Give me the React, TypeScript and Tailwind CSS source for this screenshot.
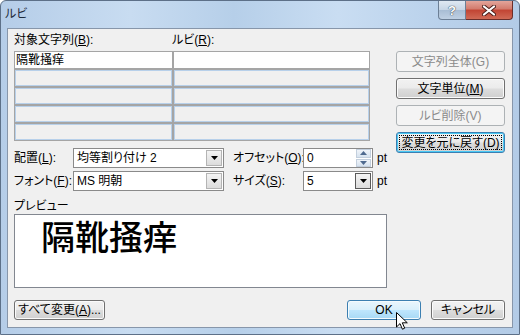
import { ReactNode } from "react";

const Acc = ({ children }: { children: ReactNode }) => (
  <span className="underline underline-offset-[1px]">{children}</span>
);

type Kind = "normal" | "disabled" | "focus" | "hover";

const Btn = ({ kind = "normal", className = "", children }: { kind?: Kind; className?: string; children: ReactNode }) => {
  const look = {
    normal:
      "border-[#707070] bg-[linear-gradient(#f2f2f2_0%,#ebebeb_48%,#dddddd_52%,#cfcfcf_100%)] shadow-[inset_0_0_0_1px_#fbfbfb]",
    disabled: "border-[#adb2b5] bg-[#f4f4f4] text-[#8b8b8b]",
    focus:
      "border-[#3c7fb1] bg-[linear-gradient(#f2f2f2_0%,#ebebeb_48%,#dddddd_52%,#cfcfcf_100%)] shadow-[inset_0_0_0_1px_#48c9f5]",
    hover:
      "border-[#3c7fb1] bg-[linear-gradient(#eaf6fd_0%,#d9f0fc_48%,#bee6fd_52%,#a7d9f5_100%)] shadow-[inset_0_0_0_1px_#f4fbfe]",
  }[kind];
  return (
    <div className={`relative flex shrink-0 items-center justify-center whitespace-nowrap rounded-[3px] border leading-none ${look} ${className}`}>
      {kind === "focus" && <div className="absolute inset-[2px] border border-dotted border-black" />}
      <span className="relative">{children}</span>
    </div>
  );
};

const Arrow = () => (
  <svg width="7" height="4" viewBox="0 0 7 4">
    <path d="M0 0h7L3.5 4z" fill="#000" />
  </svg>
);

const Combo = ({ value, className = "", dark = false }: { value: string; className?: string; dark?: boolean }) => (
  <div className={`flex h-[20px] shrink-0 items-center border border-[#8a8a8a] bg-white ${className}`}>
    <span className="flex-1 whitespace-nowrap pl-[3px] leading-none">{value}</span>
    <div
      className={`mr-[1px] flex h-[16px] w-[16px] items-center justify-center border bg-[linear-gradient(#f4f4f4,#dcdcdc)] ${
        dark ? "border-[#5a5a5a]" : "border-[#b4b4b4]"
      }`}
    >
      <Arrow />
    </div>
  </div>
);

const Spin = ({ value }: { value: string }) => (
  <div className="flex h-[20px] w-[70px] shrink-0 items-center border border-[#8a8a8a] bg-white">
    <span className="flex-1 pl-[3px] leading-none">{value}</span>
    <div className="mr-[1px] flex h-[18px] w-[15px] flex-col gap-[1px]">
      <div className="flex flex-1 items-center justify-center border border-[#c3cfdd] bg-[linear-gradient(#f0f4f9,#d6e2ef)]">
        <svg width="7" height="4" viewBox="0 0 7 4">
          <path d="M0 4h7L3.5 0z" fill="#4f6a8f" />
        </svg>
      </div>
      <div className="flex flex-1 items-center justify-center border border-[#c3cfdd] bg-[linear-gradient(#f0f4f9,#d6e2ef)]">
        <svg width="7" height="4" viewBox="0 0 7 4">
          <path d="M0 0h7L3.5 4z" fill="#4f6a8f" />
        </svg>
      </div>
    </div>
  </div>
);

const Cell = ({ first, children }: { first?: boolean; children?: ReactNode }) => (
  <div
    className={
      first
        ? "flex h-[16px] items-center bg-white pl-[1px] leading-none"
        : "h-[16px] border border-[#b7d0ea] bg-[#f0f0f0]"
    }
  >
    {children}
  </div>
);

export default function App() {
  return (
    <div className="relative flex h-[335px] w-[520px] flex-col overflow-hidden rounded-t-[6px] border border-[#5d7088] bg-[linear-gradient(90deg,#b5cde8,#c8dcf1_25%,#b6cfe9_45%,#c9ddf2_65%,#b9d1eb_85%,#b3cbe6)] font-['Liberation_Sans','Noto_Sans_CJK_JP',sans-serif] text-[12px] text-black [font-feature-settings:'palt']">
      {/* title bar */}
      <div className="flex h-[27px] shrink-0 items-start justify-between">
        <span className="pl-[4px] pt-[7px] text-[12px] leading-none text-[#1e2a3a]">ルビ</span>
        <div className="mr-[6px] flex">
          <div className="flex h-[19px] w-[28px] items-center justify-center rounded-bl-[4px] border border-t-0 border-[#6c7f95] bg-[linear-gradient(#dfe8f2,#c6d5e5_50%,#a8bdd4_51%,#bfd0e3)]">
            <span className="text-[13px] font-bold leading-none text-white [text-shadow:0_0_1px_#2f3b4a,0_0_1px_#2f3b4a]">?</span>
          </div>
          <div className="flex h-[19px] w-[47px] items-center justify-center rounded-br-[4px] border border-l-0 border-t-0 border-[#6b2e2a] bg-[linear-gradient(#e3a59b,#d27a6c_45%,#c24433_50%,#d06a56)]">
            <svg width="14" height="11" viewBox="0 0 14 11">
              <path d="M2 1.5l10 8M12 1.5l-10 8" stroke="#4a1f1b" strokeWidth="4" strokeLinecap="round" />
              <path d="M2 1.5l10 8M12 1.5l-10 8" stroke="#fff" strokeWidth="2.2" strokeLinecap="round" />
            </svg>
          </div>
        </div>
      </div>

      {/* client */}
      <div className="mx-[6px] mb-[6px] flex flex-1 flex-col whitespace-nowrap border border-[#8796aa] bg-[#f0f0f0] pl-[6px] pr-[7px]">
        <div className="flex justify-between">
          <div className="flex w-[374px] flex-col">
            <div className="mt-[4px] flex h-[14px] items-center leading-none">
              <span className="w-[158px]">
                対象文字列(<Acc>B</Acc>):
              </span>
              <span>
                ルビ(<Acc>R</Acc>):
              </span>
            </div>
            <div className="mt-[4px] grid h-[90px] w-[356px] grid-cols-[157px_1fr] gap-[2px] border border-[#a5a5a5] bg-[#a5a5a5]">
              <Cell first>隔靴掻痒</Cell>
              <Cell first />
              <Cell />
              <Cell />
              <Cell />
              <Cell />
              <Cell />
              <Cell />
              <Cell />
              <Cell />
            </div>

            <div className="mt-[7px] flex flex-col gap-[3px]">
              <div className="flex items-center leading-none">
                <span className="w-[59px] shrink-0">
                  配置(<Acc>L</Acc>):
                </span>
                <Combo value="均等割り付け 2" className="w-[151px]" />
                <span className="ml-[9px] w-[70px] shrink-0">
                  オフセット(<Acc>O</Acc>):
                </span>
                <Spin value="0" />
                <span className="ml-[4px]">pt</span>
              </div>
              <div className="flex items-center leading-none">
                <span className="w-[59px] shrink-0">
                  フォント(<Acc>F</Acc>):
                </span>
                <Combo value="MS 明朝" className="w-[151px]" />
                <span className="ml-[9px] w-[70px] shrink-0">
                  サイズ(<Acc>S</Acc>):
                </span>
                <Combo value="5" className="w-[70px]" dark />
                <span className="ml-[4px]">pt</span>
              </div>
            </div>

            <div className="mt-[9px] h-[13px] leading-none">プレビュー</div>
            <div className="mt-[1px] h-[74px] w-[373px] border border-[#828790] bg-white pl-[26px] pt-[6px]">
              <span className="text-[34px] font-medium leading-none [font-feature-settings:normal]">隔靴掻痒</span>
            </div>
          </div>

          <div className="flex w-[109px] flex-col gap-[6px] pt-[22px]">
            <Btn kind="disabled" className="h-[21px]">
              文字列全体(G)
            </Btn>
            <Btn className="h-[21px]">
              文字単位(<Acc>M</Acc>)
            </Btn>
            <Btn kind="disabled" className="h-[21px]">
              ルビ削除(V)
            </Btn>
            <Btn kind="focus" className="h-[21px]">
              変更を元に戻す(D)
            </Btn>
          </div>
        </div>

        <div className="mt-[12px] flex">
          <Btn className="h-[20px] w-[91px]">
            すべて変更(<Acc>A</Acc>)...
          </Btn>
          <Btn kind="hover" className="ml-auto h-[20px] w-[74px]">
            OK
          </Btn>
          <Btn className="ml-[10px] h-[20px] w-[74px]">キャンセル</Btn>
        </div>
      </div>

      {/* mouse pointer */}
      <svg className="absolute left-[395px] top-[311px]" width="12" height="18" viewBox="0 0 12 18">
        <path d="M0.5 0.5v14.5l3.5-3.4 2.4 5.6 2.3-1-2.4-5.4h5z" fill="#fff" stroke="#000" strokeWidth="1" strokeLinejoin="round" />
      </svg>
    </div>
  );
}
